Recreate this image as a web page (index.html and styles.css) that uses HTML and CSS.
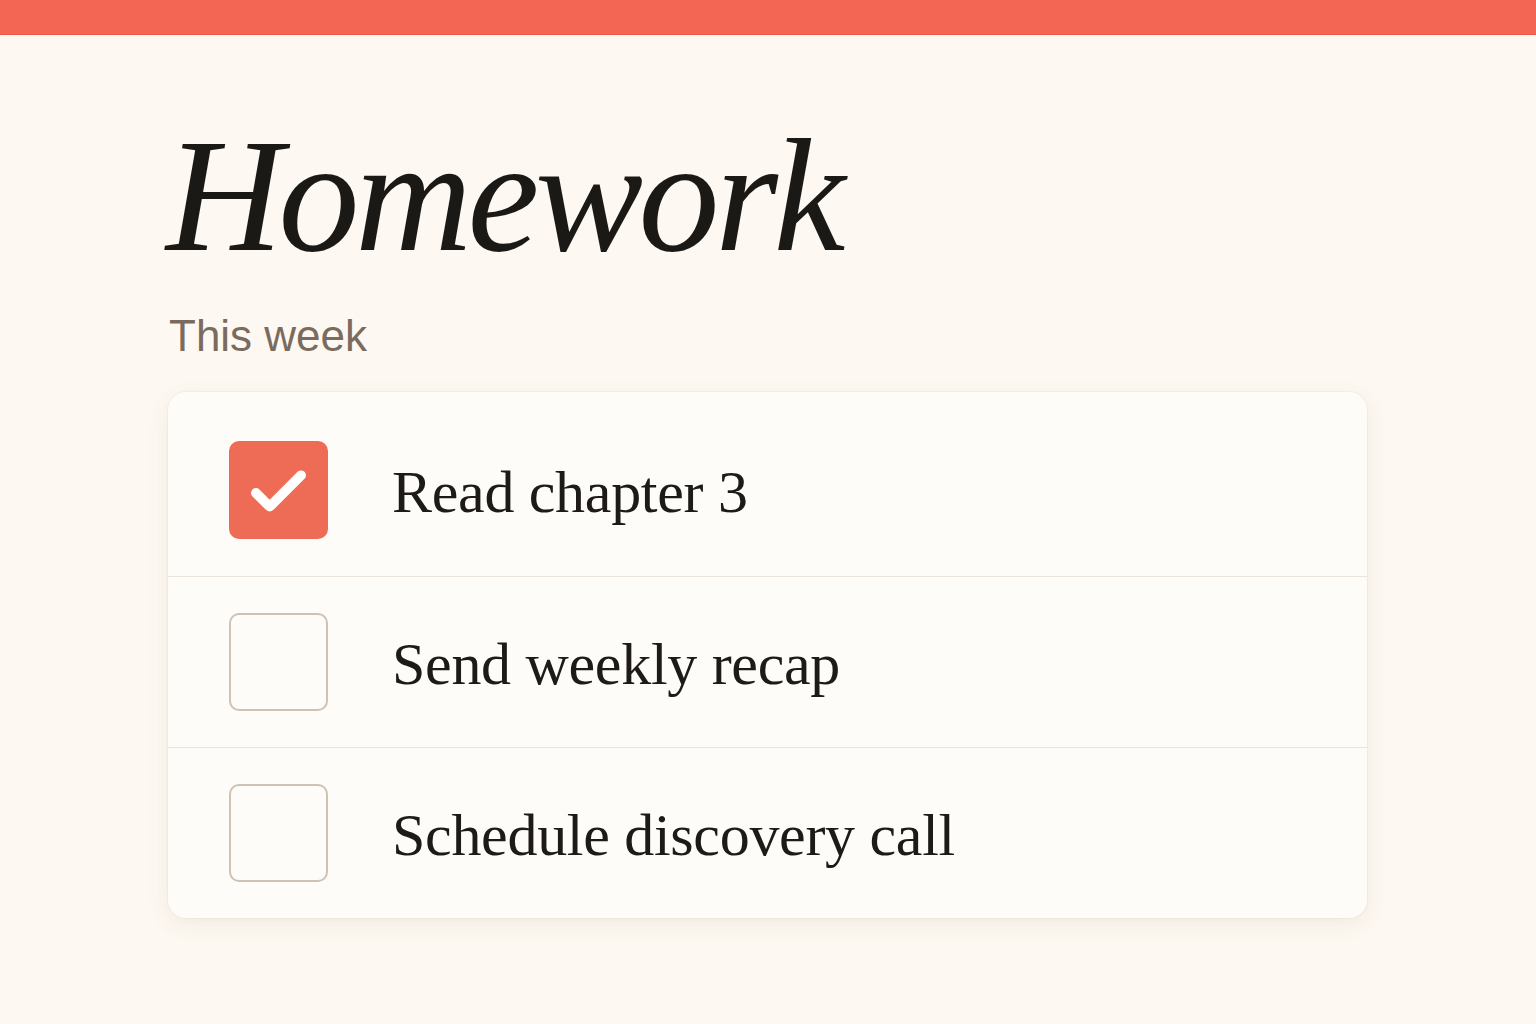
FILE: index.html
```html
<!DOCTYPE html>
<html lang="en">
<head>
  <meta charset="UTF-8" />
  <meta name="viewport" content="width=device-width, initial-scale=1.0"/>
  <title>Homework</title>
  <link rel="stylesheet" href="styles.css">
</head>
<body>
  <div class="top-bar"></div>

  <main class="page">
    <h1 class="title">Homework</h1>
    <h2 class="section-label">This week</h2>

    <ul class="task-card">
      <li class="task-row">
        <span class="check-box checked">
          <svg viewBox="0 0 100 100" width="98" height="98">
            <path d="M27 53 L41 67 L73 35" fill="none" stroke="#fff" stroke-width="10" stroke-linecap="round" stroke-linejoin="round"/>
          </svg>
        </span>
        <span class="task-text">Read chapter 3</span>
      </li>
      <li class="task-row">
        <span class="check-box"></span>
        <span class="task-text">Send weekly recap</span>
      </li>
      <li class="task-row">
        <span class="check-box"></span>
        <span class="task-text">Schedule discovery call</span>
      </li>
    </ul>
  </main>
</body>
</html>
```

FILE: styles.css
```css
* {
  box-sizing: border-box;
  margin: 0;
  padding: 0;
}

body {
  background-color: #fdf8f1;
  color: #1d1a17;
  min-height: 100vh;
}

.top-bar {
  height: 35px;
  background-color: #f26653;
  border-bottom: 1px solid #ec5a4a;
}

.page {
  padding: 80px 0 0 168px;
}

.title {
  font-family: "Liberation Serif", "Times New Roman", serif;
  font-style: italic;
  font-weight: 400;
  font-size: 162px;
  line-height: 1;
  letter-spacing: -4.5px;
  color: #1b1916;
  margin-left: -2px;
}

.section-label {
  font-family: "Liberation Sans", Arial, sans-serif;
  font-weight: 400;
  font-size: 44px;
  line-height: 1;
  color: #7b6b5f;
  margin-top: 37px;
  margin-left: 1px;
}

.task-card {
  list-style: none;
  margin-top: 34px;
  width: 1199px;
  background-color: #fefcf8;
  border-radius: 18px;
  box-shadow: 0 0 0 1px rgba(150, 120, 90, 0.05), 0 6px 22px rgba(120, 90, 60, 0.09);
}

.task-row {
  display: flex;
  align-items: center;
  gap: 64px;
  padding: 36px 60px 36px 61px;
  border-top: 1px solid #ebe4da;
}

.task-row:first-child {
  border-top: none;
  padding-top: 49px;
  padding-bottom: 37px;
}

.check-box {
  flex: none;
  width: 99px;
  height: 98px;
  border: 2px solid #cfc2b2;
  border-radius: 10px;
  background-color: #fefcf9;
}

.check-box.checked {
  border: none;
  background-color: #ee6b56;
}

.check-box svg {
  display: block;
  width: 100%;
  height: 100%;
}

.task-text {
  font-family: "Liberation Serif", "Times New Roman", serif;
  font-size: 60px;
  line-height: 1;
  letter-spacing: -0.3px;
  color: #1d1a17;
  padding-top: 4px;
}
```
